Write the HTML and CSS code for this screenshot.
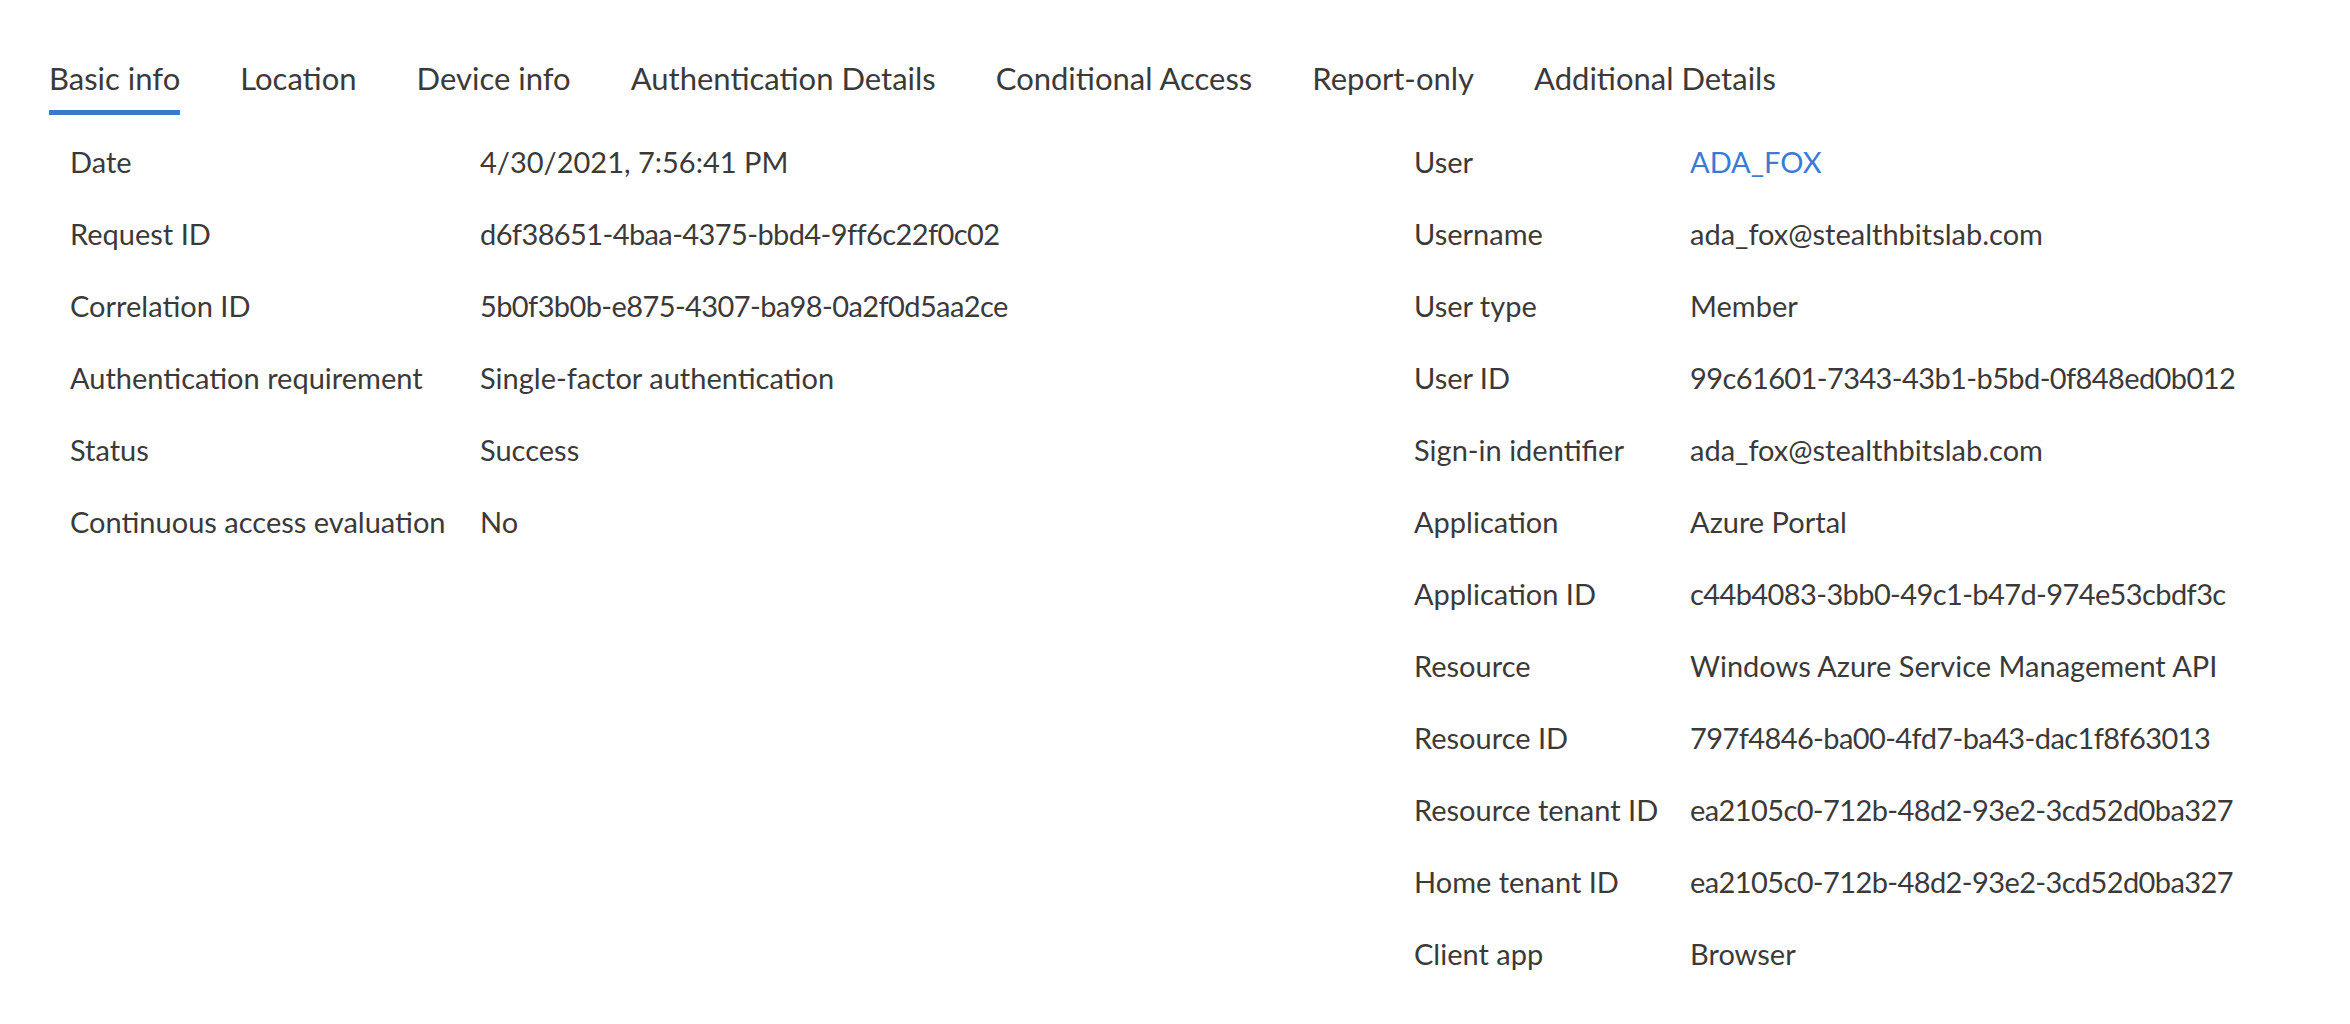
FILE: index.html
```html
<!DOCTYPE html>
<html lang="en">
<head>
    <meta charset="UTF-8">
    <title>Sign-in activity details</title>
    <link rel="stylesheet" href="styles.css">
</head>
<body>
  <nav class="tabs">
    <span class="tab active">Basic info</span>
    <span class="tab">Location</span>
    <span class="tab">Device info</span>
    <span class="tab">Authentication Details</span>
    <span class="tab">Conditional Access</span>
    <span class="tab">Report-only</span>
    <span class="tab">Additional Details</span>
  </nav>

  <main class="details">
    <!-- left column -->
    <dl class="props props-left">
      <dt>Date</dt><dd>4/30/2021, 7:56:41 PM</dd>
      <dt>Request ID</dt><dd class="guid">d6f38651-4baa-4375-bbd4-9ff6c22f0c02</dd>
      <dt>Correlation ID</dt><dd class="guid">5b0f3b0b-e875-4307-ba98-0a2f0d5aa2ce</dd>
      <dt>Authentication requirement</dt><dd>Single-factor authentication</dd>
      <dt>Status</dt><dd>Success</dd>
      <dt>Continuous access evaluation</dt><dd>No</dd>
    </dl>

    <!-- right column -->
    <dl class="props props-right">
      <dt>User</dt><dd><a href="#" class="link">ADA_FOX</a></dd>
      <dt>Username</dt><dd>ada_fox@stealthbitslab.com</dd>
      <dt>User type</dt><dd>Member</dd>
      <dt>User ID</dt><dd class="guid">99c61601-7343-43b1-b5bd-0f848ed0b012</dd>
      <dt>Sign-in identifier</dt><dd>ada_fox@stealthbitslab.com</dd>
      <dt>Application</dt><dd>Azure Portal</dd>
      <dt>Application ID</dt><dd class="guid">c44b4083-3bb0-49c1-b47d-974e53cbdf3c</dd>
      <dt>Resource</dt><dd>Windows Azure Service Management API</dd>
      <dt>Resource ID</dt><dd class="guid">797f4846-ba00-4fd7-ba43-dac1f8f63013</dd>
      <dt>Resource tenant ID</dt><dd class="guid">ea2105c0-712b-48d2-93e2-3cd52d0ba327</dd>
      <dt>Home tenant ID</dt><dd class="guid">ea2105c0-712b-48d2-93e2-3cd52d0ba327</dd>
      <dt>Client app</dt><dd>Browser</dd>
    </dl>
  </main>
</body>
</html>
```

FILE: styles.css
```css
body {
  margin: 0;
  background: #fff;
  color: #3b3a39;
  font-family: Lato, "Open Sans", sans-serif;
  font-size: 29px;
}

/* Tab strip */
.tabs {
  display: flex;
  gap: 60px;
  padding: 58px 0 0 49px;
  font-size: 31px;
}

.tab {
  line-height: 40px;
  padding-bottom: 12px;
  border-bottom: 5px solid transparent;
  white-space: nowrap;
}

.tab.active {
  border-bottom-color: #3b78c8;
}

/* Property lists */
.details {
  display: grid;
  grid-template-columns: 1344px 1fr;
  padding: 11px 0 0 70px;
}

.props {
  display: grid;
  margin: 0;
  align-content: start;
}

.props-left {
  grid-template-columns: 410px 1fr;
}

.props-right {
  grid-template-columns: 276px 1fr;
}

.props dt,
.props dd {
  margin: 0;
  line-height: 72px;
  white-space: nowrap;
}

/* ids run a little tighter */
.props .guid {
  letter-spacing: -0.6px;
}

.link {
  color: #3a7bd5;
  text-decoration: none;
}
```
